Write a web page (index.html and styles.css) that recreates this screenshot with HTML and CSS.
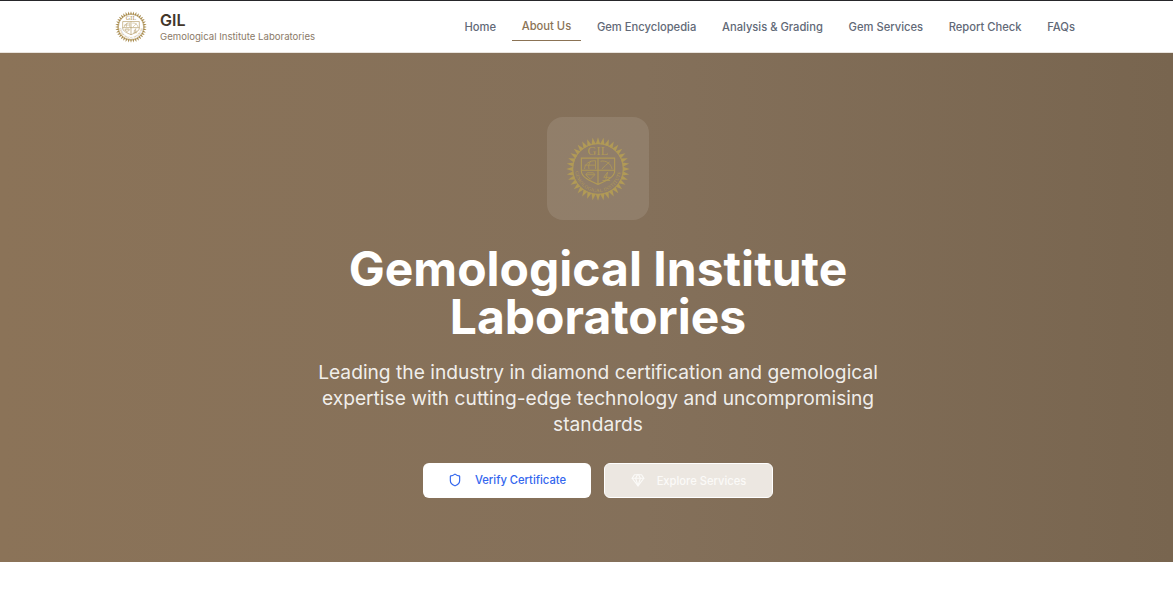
FILE: index.html
```html
<!DOCTYPE html>
<html lang="en">
<head>
<meta charset="utf-8">
<title>Gemological Institute Laboratories</title>
<link rel="stylesheet" href="styles.css">
</head>
<body>
<svg class="defs" width="0" height="0" aria-hidden="true">
  <defs>
    <polygon id="ray" points="46.600,11 53.400,11 50,0.500"/>
    <g id="ray3"><use href="#ray"/><use href="#ray" transform="rotate(10 50 50)"/><use href="#ray" transform="rotate(20 50 50)"/></g>
    <g id="ray9"><use href="#ray3"/><use href="#ray3" transform="rotate(30 50 50)"/><use href="#ray3" transform="rotate(60 50 50)"/></g>
    <symbol id="emblem" viewBox="0 0 100 100">
      <g class="em-fill">
        <use href="#ray9"/>
        <use href="#ray9" transform="rotate(90 50 50)"/>
        <use href="#ray9" transform="rotate(180 50 50)"/>
        <use href="#ray9" transform="rotate(270 50 50)"/>
      </g>
      <circle class="em-line" cx="50" cy="50" r="39.500" stroke-width="1.500"/>
      <text class="em-text" x="50" y="28" text-anchor="middle" font-size="19" letter-spacing=".5">GIL</text>
      <path class="em-line" stroke-width="1.800" d="M24 33H76V53C76 63 62 69 50 74C38 69 24 63 24 53Z"/>
      <path class="em-line" stroke-width="1.800" d="M50 33V74M24 52H76"/>
      <path class="em-line" stroke-width="1.300" d="M29 50C29 42 37 37 46 37M39 37C35 42 35 46 36 50M29 44H46M46 37V50M54 38C62 36 70 41 72 50M56 50C60 46 64 42 68 39"/>
      <path class="em-line" stroke-width="1.300" d="M33 56H43L45 59L38 66L31 59ZM31 59H45M57 68H69M62 68L65 55L59 63H70"/>
      <path id="em-arc" class="em-none" d="M14 50A36 36 0 0 0 86 50"/>
      <text class="em-text" font-size="7.500" letter-spacing=".5"><textPath href="#em-arc" startOffset="50%" text-anchor="middle">GEMOLOGICAL INSTITUTE</textPath></text>
    </symbol>
  </defs>
</svg>

<header class="topbar">
  <div class="topbar-inner">
    <a class="brand" href="#">
      <svg class="brand-logo"><use href="#emblem"/></svg>
      <span class="brand-text">
        <span class="brand-name">GIL</span>
        <span class="brand-sub">Gemological Institute Laboratories</span>
      </span>
    </a>
    <nav class="nav">
      <a class="nav-link" href="#">Home</a>
      <a class="nav-link nav-active" href="#">About Us</a>
      <a class="nav-link" href="#">Gem Encyclopedia</a>
      <a class="nav-link" href="#">Analysis &amp; Grading</a>
      <a class="nav-link" href="#">Gem Services</a>
      <a class="nav-link" href="#">Report Check</a>
      <a class="nav-link" href="#">FAQs</a>
    </nav>
  </div>
</header>

<section class="hero">
  <div class="hero-icon">
    <svg class="hero-logo"><use href="#emblem"/></svg>
  </div>
  <h1 class="hero-title">Gemological Institute<br>Laboratories</h1>
  <p class="hero-lead">Leading the industry in diamond certification and gemological expertise with cutting-edge technology and uncompromising standards</p>
  <div class="hero-actions">
    <a class="btn btn-primary" href="#">
      <svg class="btn-icon" viewBox="0 0 24 24"><path d="M20 13c0 5-3.500 7.500-7.660 8.950a1 1 0 0 1-.67-.01C7.500 20.500 4 18 4 13V6a1 1 0 0 1 1-1c2 0 4.500-1.200 6.240-2.720a1.170 1.170 0 0 1 1.520 0C14.510 3.810 17 5 19 5a1 1 0 0 1 1 1z"/></svg>
      <span>Verify Certificate</span>
    </a>
    <a class="btn btn-ghost" href="#">
      <svg class="btn-icon" viewBox="0 0 24 24"><path d="M6 3h12l4 6-10 13L2 9Z"/><path d="M11 3 8 9l4 13 4-13-3-6"/><path d="M2 9h20"/></svg>
      <span class="btn-ghost-label">Explore Services</span>
    </a>
  </div>
</section>
<div class="page-rest"></div>
</body>
</html>
```
FILE: styles.css
```css
* { box-sizing: border-box; }

html, body {
  margin: 0;
  padding: 0;
}

body {
  font-family: Inter, "Liberation Sans", sans-serif;
  background: #fff;
  color: #3f3226;
  height: 601px;
  overflow: hidden;
}

a { text-decoration: none; color: inherit; }

.defs { display: block; height: 0; }

.em-fill { fill: currentColor; }
.em-line { fill: none; stroke: currentColor; }
.em-none { fill: none; }
.em-text {
  fill: currentColor;
  font-family: "Liberation Serif", serif;
}

.topbar {
  height: 53px;
  background: #fff;
  border-top: 1px solid #26262a;
  border-bottom: 1px solid #e9e4de;
}

.topbar-inner {
  height: 51px;
  padding: 0 88px 0 115px;
  display: flex;
  align-items: center;
  justify-content: space-between;
}

.brand {
  display: flex;
  align-items: center;
  gap: 13px;
}

.brand-logo {
  width: 32px;
  height: 32px;
  color: #a98c4e;
}

.brand-text {
  display: flex;
  flex-direction: column;
}

.brand-name {
  font-size: 16px;
  line-height: 20px;
  font-weight: 600;
  color: #43362a;
}

.brand-sub {
  font-size: 9.600px;
  line-height: 14px;
  color: #8b7a68;
}

.nav {
  display: flex;
  align-items: center;
  gap: 5.700px;
}

.nav-link {
  padding: 8px 10px;
  height: 31px;
  font-size: 11.200px;
  line-height: 16px;
  font-weight: 500;
  color: #626977;
  border-bottom: 1px solid transparent;
}

.nav-active {
  color: #8b7355;
  border-bottom-color: #8b7355;
  transform: translateY(-1px);
}

.hero {
  height: 509px;
  background: linear-gradient(90deg, #8b7358 0%, #84705a 55%, #78654f 100%);
  display: flex;
  flex-direction: column;
  align-items: center;
  padding: 64px 0 0 23px;
  color: #fff;
}

.hero-icon {
  width: 102px;
  height: 103px;
  border-radius: 16px;
  background: rgba(255, 255, 255, 0.1);
  display: flex;
  align-items: center;
  justify-content: center;
}

.hero-logo {
  width: 64px;
  height: 64px;
  color: #b19a56;
}

.hero-title {
  margin: 25px 0 0;
  font-size: 48px;
  line-height: 48px;
  font-weight: 700;
  text-align: center;
}

.hero-lead {
  margin: 18px 0 0;
  width: 576px;
  font-size: 19.200px;
  line-height: 26px;
  text-align: center;
  color: rgba(255, 255, 255, 0.9);
}

.hero-actions {
  margin-top: 26px;
  display: flex;
  gap: 13px;
}

.btn {
  height: 35px;
  padding-bottom: 1px;
  border-radius: 6px;
  display: flex;
  align-items: center;
  justify-content: center;
  font-size: 11.200px;
  font-weight: 500;
}

.btn-icon {
  width: 14px;
  height: 14px;
  fill: none;
  stroke: currentColor;
  stroke-width: 2;
  stroke-linecap: round;
  stroke-linejoin: round;
}

.btn-primary {
  width: 168px;
  gap: 13px;
  background: #fff;
  color: #3366ee;
}

.btn-ghost {
  width: 169px;
  gap: 12px;
  background: #ece7e1;
  border: 1px solid #fff;
  color: #fbfaf8;
}

.btn-ghost-label {
  padding-top: 2px;
}

.page-rest {
  height: 39px;
  background: #fff;
}
```
